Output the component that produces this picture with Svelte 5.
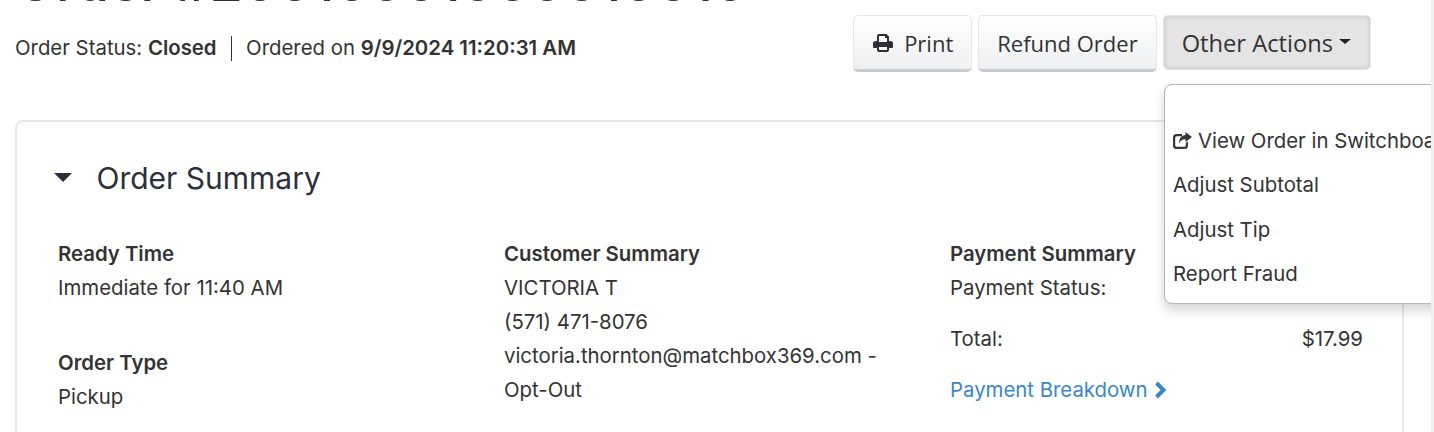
<script>
  const actions = ['Adjust Subtotal', 'Adjust Tip', 'Report Fraud'];
</script>

<div class="page">
  <h1 class="title">Order #20010001000010010</h1>
  <div class="head">
    <div class="meta">
      <span>Order Status: <b>Closed</b></span>
      <i class="sep"></i>
      <span>Ordered on <b>9/9/2024 11:20:31 AM</b></span>
    </div>
    <div class="btns">
      <button class="btn print">
        <svg viewBox="0 0 20 18" width="20" height="18"><path fill="#2d3038" fill-rule="evenodd" d="M4 2a2 2 0 0 1 2-2h7.500L16 2.500V7h1.200A2.800 2.800 0 0 1 20 9.800V13a1 1 0 0 1-1 1h-3v2a2 2 0 0 1-2 2H6a2 2 0 0 1-2-2v-2H1a1 1 0 0 1-1-1V9.800A2.800 2.800 0 0 1 2.800 7H4zM6 2v6h8V4h-2V2zM6 13v3h8v-3z"/></svg>
        Print
      </button>
      <button class="btn refund">Refund Order</button>
      <div class="drop">
        <button class="btn open">Other Actions<span class="caret"></span></button>
      </div>
    </div>
  </div>

  <div class="menu">
    <div class="item">
      <svg viewBox="0 0 19 17" width="19" height="17"><path fill="#33363d" d="M3.500 2H9v2.200H3.800A1.600 1.600 0 0 0 2.200 5.800v7.400a1.600 1.600 0 0 0 1.600 1.600h7.400a1.600 1.600 0 0 0 1.600-1.600V11l2.200-1.700v4.200A3.500 3.500 0 0 1 11.500 17h-8A3.500 3.500 0 0 1 0 13.500v-8A3.500 3.500 0 0 1 3.500 2zM12.500 0 19 5l-6.500 5V7.200C9.500 7.200 7.500 8.500 6 11.500 6 6.500 8.500 3.500 12.500 3z"/></svg>
      View Order in Switchboard
    </div>
    {#each actions as a}
      <div class="item">{a}</div>
    {/each}
  </div>

  <section class="card">
    <div class="card-title"><span class="tri"></span><h2>Order Summary</h2></div>
    <div class="cols">
      <div class="col">
        <div class="group">
          <b>Ready Time</b>
          <div>Immediate for 11:40 AM</div>
        </div>
        <div class="group">
          <b>Order Type</b>
          <div>Pickup</div>
        </div>
      </div>
      <div class="col">
        <b>Customer Summary</b>
        <div>VICTORIA T</div>
        <div>(571) 471-8076</div>
        <div>victoria.thornton@matchbox369.com -<br />Opt-Out</div>
      </div>
      <div class="col pay">
        <b>Payment Summary</b>
        <div>Payment Status:</div>
        <div class="total"><span>Total:</span><span>$17.99</span></div>
        <a class="link" href="#top">Payment Breakdown
          <svg viewBox="0 0 13 18" width="13" height="18"><path fill="none" stroke="#3a87c8" stroke-width="4" d="M2.500 2 9.500 9 2.500 16"/></svg>
        </a>
      </div>
    </div>
  </section>
</div>

<style>
  :global(body) { margin: 0; background: #fff; overflow: hidden; }
  .page { position: relative; height: 432px; overflow: hidden; padding: 0 27px 0 15px; box-sizing: border-box; width: 1434px; border-right: 3px solid #efefef; font-family: Inter, sans-serif; font-size: 20.380px; line-height: 34px; color: #333; }
  .title { margin: -43px 0 0 0; height: 50px; font-size: 53.650px; line-height: 50px; font-weight: 500; color: #2b303b; white-space: nowrap; }
  .head { display: flex; justify-content: space-between; height: 113px; }
  .meta { display: flex; align-items: center; height: 34px; margin-top: 24px; }
  .meta b { font-weight: 600; }
  .sep { width: 1.500px; height: 25px; background: #333; margin: 0 14px 0 14px; }
  .btns { display: flex; gap: 6px; margin-top: 8px; margin-right: 33px; align-items: flex-start; }
  .btn { height: 57px; box-sizing: border-box; padding: 0 19px; display: flex; align-items: center; gap: 11px; font: 22px/30px "Open Sans", sans-serif; color: #333; background: linear-gradient(#fff, #eef0f1); border: 1px solid #e6e6e6; border-bottom: 3px solid #c9cbcc; border-radius: 5px; }
  .btn.print { padding-right: 18px; }
  .btn.refund { padding: 0 18px; }
  .btn.open { background: #e4e4e4; border: 1px solid #e6e6e6; box-shadow: inset 0 0 5px rgba(0,0,0,.15); height: 55px; gap: 6px; font-size: 23.700px; padding: 0 19px 0 18px; }
  .caret { border-top: 5px solid #222; border-left: 6px solid transparent; border-right: 6px solid transparent; margin-top: -3px; }
  .drop { position: relative; }
  .menu { position: absolute; top: 84px; left: 1164px; width: 340px; height: 220px; box-sizing: border-box; background: #fff; border: 1px solid #b5b5b5; border-radius: 8px; box-shadow: 0 6px 12px rgba(0,0,0,.18); padding-top: 33.350px; z-index: 3; }
  .item { display: flex; align-items: center; gap: 6px; height: 44.500px; padding-left: 8px; white-space: nowrap; }
  .card { height: 340px; box-sizing: border-box; border: 2px solid #e8e8e8; border-radius: 8px; padding: 31px 39px 0 37px; }
  .card-title { display: flex; align-items: center; gap: 24.500px; height: 50px; }
  .tri { border-top: 9px solid #2b303b; border-left: 9px solid transparent; border-right: 9px solid transparent; margin-top: -2px; }
  h2 { margin: 0; font-size: 30px; line-height: 50px; font-weight: 400; color: #2b303b; }
  .cols { display: grid; grid-template-columns: 446px 446px 1fr; margin-top: 34px; margin-left: 4px; }
  .col b { font-weight: 600; display: block; }
  .group { margin-bottom: 41px; }
  .total { display: flex; justify-content: space-between; margin-top: 17px; }
  .link { display: flex; align-items: center; gap: 6px; margin-top: 17px; color: #3a87c8; text-decoration: none; }
</style>
